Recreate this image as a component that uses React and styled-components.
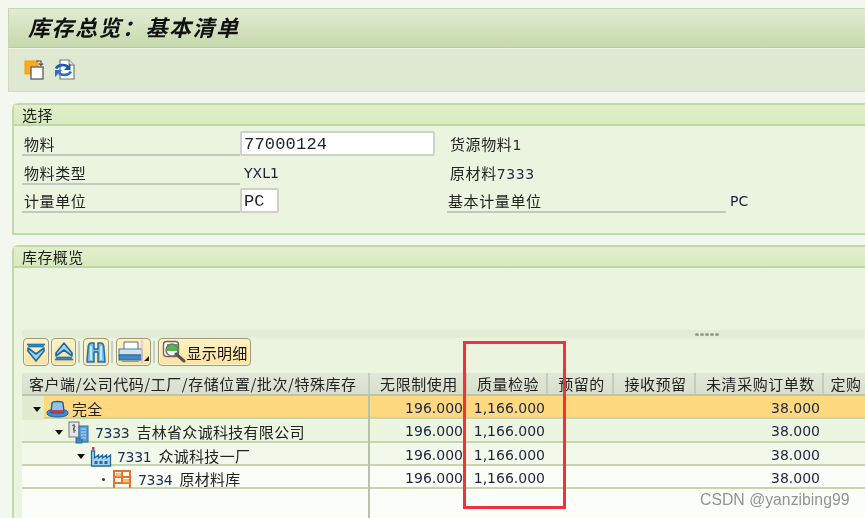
import React from "react";
import styled, { createGlobalStyle } from "styled-components";

const Global = createGlobalStyle`
  html, body { margin: 0; padding: 0; background: #f4f7f0; overflow: hidden; }
  #root { width: 865px; height: 518px; overflow: hidden; }
  * { box-sizing: border-box; }
`;
const CJK = `"Noto Sans CJK SC", "Noto Sans", sans-serif`;
const NUM = `"DejaVu Sans", "Noto Sans CJK SC", sans-serif`;

const Page = styled.div`
  position: relative; width: 865px; height: 518px; overflow: hidden;
  padding: 8px 0 0 8px; font-family: ${CJK}; color: #1d1d1d; filter: blur(0.35px);
`;
const TitleBar = styled.div`
  height: 40px; margin-right: -4px; display: flex; align-items: center; padding: 0 0 4px 19px;
  border: 1px solid #c4d9b0; border-bottom: 1px solid #b7cf9e;
  background: linear-gradient(180deg, #e2ecd4 0%, #c6d9ac 100%);
`;
const Title = styled.h1`
  margin: 0; font-size: 22px; line-height: 26px; font-weight: 700; font-style: italic;
  letter-spacing: 1.5px; color: #111;
`;
const AppBar = styled.div`
  height: 44px; margin-right: -4px; display: flex; align-items: center; gap: 8px; padding: 0 0 2px 15px;
  background: #dfe8d0; border: 1px solid #d0dec0; border-top: 1px solid #f0f5e8;
`;
const Panel = styled.section`
  margin-left: 4px; margin-right: -4px; border: 2px solid #c0dba9; border-radius: 6px 0 0 0;
  background: #ebf4de;
  margin-top: ${p => p.$top}px;
  height: ${p => p.$height}px;
`;
const PanelHead = styled.div`
  height: 21px; padding-left: 8px; font-size: 15px; line-height: 20px; letter-spacing: .4px;
  background: linear-gradient(180deg, #e1efcb, #d9eabf); border-bottom: 2px solid #bcd8a4;
`;
const Form = styled.div`
  display: grid; grid-template-columns: 218px 207px 282px 1fr; grid-auto-rows: 28.5px;
  padding: 5px 0 0 8px;
`;
const Label = styled.div`
  height: 25px; font-size: 15px; line-height: 26px; letter-spacing: .6px; padding-left: ${p => p.$pl ?? 2}px;
  color: #222; border-bottom: ${p => (p.$line ? "2px solid #c5c8bf" : "none")};
  margin-right: ${p => p.$mr || 0}px;
`;
const Plain = styled(Label)`padding-left: 3px;`;
const Input = styled.div`
  height: 25px; width: ${p => p.$w}px; background: #fff; border: 2px solid #cdd1c8; border-radius: 2px;
  font-family: "Liberation Mono", monospace; font-size: 17px; line-height: 24px; padding-left: 2px; color: #222;
  letter-spacing: ${p => p.$ls || 0}px;
`;
const Value = styled.div`
  font-family: ${NUM}; font-size: 14px; line-height: 27px; padding-left: ${p => p.$pl ?? 4}px; color: #14213f;
  height: 25px;
`;
const Mixed = styled.span`font-family: ${NUM}; font-size: 14px; color: ${p => p.$c || "#1b2a4a"};`;
const Blank = styled.div`height: 62px;`;
const Inner = styled.div`padding-left: 8px;`;
const Splitter = styled.div`
  height: 8px; background: #e3ecd6; display: flex; justify-content: flex-end; align-items: center;
  gap: 1px; padding-right: 148px;
`;
const Grip = styled.i`width: 4px; height: 3px; border-radius: 50%; background: #8f9f86;`;
const GridBar = styled.div`
  height: 35px; display: flex; align-items: flex-start; gap: 2px; padding-left: 1px;
`;
const Btn = styled.div`
  height: 28px; width: ${p => p.$w}px; display: flex; align-items: center; justify-content: center;
  background: linear-gradient(180deg, #fff2c4, #fde29f); border: 1px solid #a09877; border-radius: 4px;
  box-shadow: inset 0 0 0 1px #fff3cf; font-size: 15px; letter-spacing: .2px; color: #111; flex: none;
`;
const Sep = styled.i`width: 2px; height: 22px; margin: 3px 1px 0 0; background: #c9cfc0; flex: none;`;
const Cols = "348px 97px 81px 66px 82px 128px 1fr";
const Table = styled.div`background: #fbfef8; height: 160px; position: relative;`;
const Head = styled.div`
  display: grid; grid-template-columns: ${Cols}; height: 23px;
  background: linear-gradient(180deg, #e1e7d9, #d8e0cc); border-bottom: 2px solid #b9c6ac;
`;
const Th = styled.div`
  font-size: 15px; line-height: 21px; letter-spacing: .55px; white-space: nowrap; overflow: hidden; color: #222;
  text-align: ${p => (p.$left ? "left" : "center")}; padding-left: ${p => (p.$left ? 7 : 3)}px;
  border-right: 2px solid #c3cdb8;
`;
const Row = styled.div`
  display: grid; grid-template-columns: ${Cols}; height: 23.25px;
  background: ${p => p.$bg}; border-bottom: 2px solid #c4d5b0;
`;
const TreeCell = styled.div`
  display: flex; align-items: center; padding: 2px 0 0 ${p => 11 + p.$level * 22}px;
  white-space: nowrap; color: #222; border-right: 2px solid #b6c3aa;
  background: ${p => (p.$strip ? "linear-gradient(90deg, #e0ebd0 22px, transparent 22px)" : "none")};
`;
const TreeText = styled.span`font-size: 15px; letter-spacing: .3px; line-height: 22px; margin-left: ${p => p.$ml}px;`;
const Toggle = styled.span`
  width: 0; height: 0; flex: none; margin-right: 5px;
  border-left: 4px solid transparent; border-right: 4px solid transparent; border-top: 5px solid #111;
`;
const Dot = styled.span`
  width: 3px; height: 3px; flex: none; background: #333; border-radius: 50%; margin: 0 7px 0 3px;
`;
const Code = styled.span`font-family: ${NUM}; font-size: 14px; letter-spacing: -.3px; color: #1c2d52; margin-right: 7px;`;
const Num = styled.div`
  font-family: ${NUM}; font-size: 14px; line-height: 22px; padding-top: 1px; text-align: right; padding-right: ${p => p.$pr}px; color: #1a2544;
  white-space: nowrap;
`;
const Filler = styled.div`
  position: absolute; left: 0; top: 116px; bottom: 0; width: 348px; border-right: 2px solid #b6c3aa;
`;
const RedBox = styled.div`
  position: absolute; left: 463px; top: 341px; width: 103px; height: 168px; border: 3px solid #f2323a;
`;
const Mark = styled.div`
  position: absolute; left: 700px; top: 491px; font-family: "Liberation Sans", sans-serif; font-size: 15.8px;
  color: #8f9490; white-space: nowrap;
`;

const OutIcon = () => (
  <svg width="21" height="21" viewBox="0 0 21 21">
    <rect x="1" y="2" width="13" height="13" fill="#fbaa1e" stroke="#f39a10" />
    <rect x="7" y="8" width="12" height="12" fill="#fff" stroke="#666" strokeWidth="1.4" />
    <path d="M12 2h5v4M15 4.500l2 2 2-2" fill="none" stroke="#555" strokeWidth="1.2" />
  </svg>
);
const RefreshIcon = () => (
  <svg width="23" height="21" viewBox="0 0 23 21">
    <path d="M7 1h9l5 5v14H7z" fill="#fff" stroke="#777" strokeWidth="1.2" />
    <path d="M16 1v5h5" fill="#e4e4e4" stroke="#777" />
    <path d="M3 9.500C5 5.500 12 5 15 8" fill="none" stroke="#1c56b0" strokeWidth="2.600" />
    <path d="M17.500 4.500v6.500h-6.500z" fill="#1c56b0" />
    <path d="M18 12.500C16 16.500 9 17 6 14" fill="none" stroke="#2a6cd0" strokeWidth="2.600" />
    <path d="M2 18v-7h7z" fill="#2a6cd0" />
  </svg>
);
const Chevrons = ({ up }) => (
  <svg width="22" height="22" viewBox="0 0 22 22" style={{ transform: up ? "scaleY(-1)" : "none" }}>
    <path d="M2 3h18l-2 3H4z" fill="#2e86c4" stroke="#14608f" strokeWidth=".6" />
    <path d="M3 7l8 6 8-6v3l-8 10-8-10z" fill="#9ed4ee" stroke="#1a6a9e" strokeWidth="1.6" strokeLinejoin="round" />
  </svg>
);
const Binoculars = () => (
  <svg width="22" height="23" viewBox="0 0 22 23">
    <path d="M3 8c0-3 1-6 3-6h3v6h4V2h3c2 0 3 3 3 6l1 13h-7V11h-4v10H2z" fill="#7cbce6" stroke="#1e6fa8" strokeWidth="1.5" strokeLinejoin="round" />
    <path d="M6 5v14M16 5v14" stroke="#dff1fb" strokeWidth="1.500" />
  </svg>
);
const Printer = () => (
  <svg width="33" height="24" viewBox="0 0 33 24">
    <path d="M7 9V2h14v7" fill="#fff" stroke="#5f6f7a" />
    <rect x="2" y="9" width="23" height="6" fill="#cfe2ee" stroke="#3f7fa8" />
    <rect x="2" y="15" width="23" height="5" fill="#3f8cc0" stroke="#2a6a94" />
    <rect x="5" y="20" width="17" height="2" fill="#88a0ae" />
    <path d="M25 0v24" stroke="#eeb8e0" strokeWidth="1.500" />
    <path d="M27 21h5v-5z" fill="#222" />
  </svg>
);
const DetailIcon = () => (
  <svg width="24" height="24" viewBox="0 0 24 24" style={{ marginRight: 1 }}>
    <rect x="1.500" y="1.500" width="15" height="15" rx="3" fill="#fff" stroke="#666" strokeWidth="1.400" />
    <rect x="5" y="4" width="11" height="7" fill="#52b848" />
    <circle cx="10" cy="10" r="6" fill="none" stroke="#777" strokeWidth="1.600" />
    <path d="M14 14l8 7" stroke="#555" strokeWidth="3" strokeLinecap="round" />
  </svg>
);
const Hat = () => (
  <svg width="23" height="19" viewBox="0 0 23 19" style={{ flex: "none" }}>
    <path d="M6 3c0-2 11-2 11 0l1 9H5z" fill="#8fc4ea" stroke="#1a5da0" strokeWidth="1.400" />
    <path d="M5 10h13v3H5z" fill="#d83a36" />
    <path d="M1 13c0-3 3-3 4-3v3h13v-3c1 0 4 0 4 3 0 3-5 4-10.500 4S1 16 1 13z" fill="#3f8ccf" stroke="#1a5da0" />
  </svg>
);
const Company = () => (
  <svg width="21" height="23" viewBox="0 0 21 23" style={{ flex: "none" }}>
    <rect x="1" y="1" width="10" height="15" fill="#e6e6e6" stroke="#777" />
    <path d="M4 5c2-2 4 0 2 2s1 4 2 2M6 3v9" stroke="#555" fill="none" />
    <rect x="11" y="5" width="9" height="16" fill="#5b9ed4" stroke="#2a6ea8" />
    <rect x="8" y="17" width="6" height="5" fill="#3f86c4" stroke="#2a6ea8" />
    <path d="M13 8h5M13 11h5M13 14h5M13 17h5" stroke="#bcdcf2" />
  </svg>
);
const Factory = () => (
  <svg width="22" height="21" viewBox="0 0 21 21" style={{ flex: "none" }}>
    <path d="M1 20V5h3v7l4-3v3l4-3v3l4-3v3l4-3v11z" fill="#a9d3ef" stroke="#1f6aa5" strokeWidth="1.300" />
    <rect x="1.500" y="1" width="2.500" height="3" fill="#e23b2e" />
    <path d="M4 15h3v3H4zM9 15h3v3H9zM14 15h3v3h-3z" fill="#1f6aa5" />
  </svg>
);
const Shelf = () => (
  <svg width="20" height="20" viewBox="0 0 20 20" style={{ flex: "none" }}>
    <path d="M2 1v18M18 1v18M10 1v14M2 2h16M2 8h16M2 14h16" stroke="#e8702a" strokeWidth="2" fill="none" />
    <rect x="4" y="4" width="5" height="3.500" fill="#f5c46a" />
    <rect x="11" y="10" width="6" height="3.500" fill="#f5c46a" />
  </svg>
);

const columns = ["无限制使用", "质量检验", "预留的", "接收预留", "未清采购订单数", "定购"];
const rows = [
  { level: 0, bg: "#ffd97f", icon: <Hat />, text: "完全", strip: true, ml: 3 },
  { level: 1, bg: "#ebf5df", icon: <Company />, code: "7333", text: "吉林省众诚科技有限公司", ml: 6 },
  { level: 2, bg: "#f2f8ea", icon: <Factory />, code: "7331", text: "众诚科技一厂", ml: 5 },
  { level: 3, bg: "#fbfdf7", icon: <Shelf />, code: "7334", text: "原材料库", leaf: true, ml: 6 },
];

export default function App() {
  return (
    <Page>
      <Global />
      <TitleBar><Title>库存总览：基本清单</Title></TitleBar>
      <AppBar><OutIcon /><RefreshIcon /></AppBar>
      <Panel $top={11} $height={132}>
        <PanelHead>选择</PanelHead>
        <Form>
          <Label $line>物料</Label>
          <Input $w={195} $ls={.2}>77000124</Input>
          <Plain>货源物料<Mixed $c="#3a2030">1</Mixed></Plain>
          <span />
          <Label $line>物料类型</Label>
          <Value>YXL1</Value>
          <Plain>原材料<Mixed>7333</Mixed></Plain>
          <span />
          <Label $line>计量单位</Label>
          <Input $w={39}>PC</Input>
          <Label $line $pl={1} $mr={3}>基本计量单位</Label>
          <Value $pl={1}>PC</Value>
        </Form>
      </Panel>
      <Panel $top={10} $height={290}>
        <PanelHead>库存概览</PanelHead>
        <Blank />
        <Inner>
          <Splitter><Grip /><Grip /><Grip /><Grip /><Grip /></Splitter>
          <GridBar>
            <Btn $w={26}><Chevrons /></Btn>
            <Btn $w={25}><Chevrons up /></Btn>
            <Sep />
            <Btn $w={26}><Binoculars /></Btn>
            <Sep />
            <Btn $w={35}><Printer /></Btn>
            <Sep />
            <Btn $w={93}><DetailIcon />显示明细</Btn>
          </GridBar>
          <Table>
            <Head>
              <Th $left>客户端/公司代码/工厂/存储位置/批次/特殊库存</Th>
              {columns.map(c => <Th key={c}>{c}</Th>)}
            </Head>
            {rows.map(r => (
              <Row key={r.text} $bg={r.bg}>
                <TreeCell $level={r.level} $strip={r.strip}>
                  {r.leaf ? <Dot /> : <Toggle />}
                  {r.icon}
                  <TreeText $ml={r.ml}>
                    {r.code && <Code>{r.code}</Code>}
                    {r.text}
                  </TreeText>
                </TreeCell>
                <Num $pr={4}>196.000</Num>
                <Num $pr={3}>1,166.000</Num>
                <span /><span />
                <Num $pr={4}>38.000</Num>
                <span />
              </Row>
            ))}
            <Filler />
          </Table>
        </Inner>
      </Panel>
      <RedBox />
      <Mark>CSDN @yanzibing99</Mark>
    </Page>
  );
}
